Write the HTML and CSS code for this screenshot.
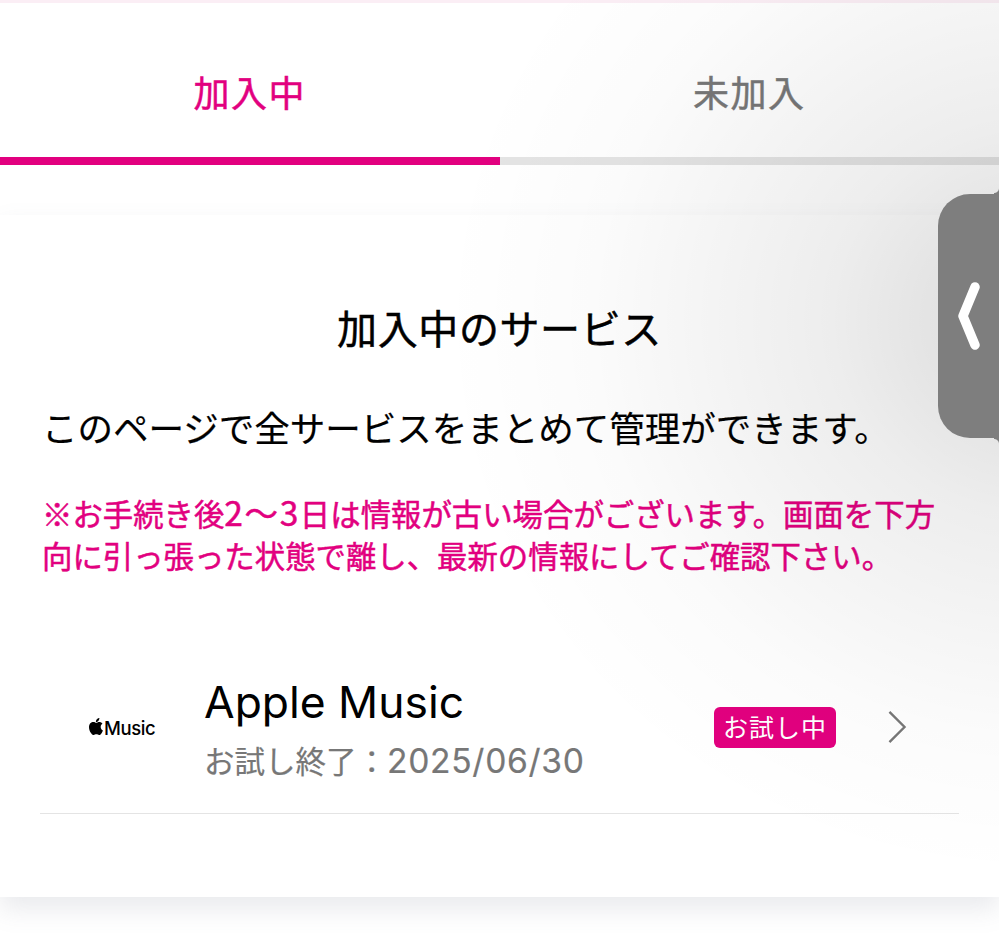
FILE: index.html
```html
<!DOCTYPE html>
<html lang="ja">
<head>
<meta charset="utf-8">
<title>加入中のサービス</title>
<link rel="stylesheet" href="styles.css">
</head>
<body>
<div class="page">
  <div class="top-strip"></div>
  <nav class="tabs">
    <div class="tab tab-active">加入中</div>
    <div class="tab">未加入</div>
  </nav>
  <main class="card">
    <h1 class="title">加入中のサービス</h1>
    <p class="lead">このページで全サービスをまとめて管理ができます。</p>
    <p class="notice">※お手続き後<span class="notice-num">2〜3</span>日は情報が古い場合がございます。画面を下方<br>向に引っ張った状態で離し、最新の情報にしてご確認下さい。</p>
    <div class="service">
      <div class="logo">
        <svg class="apple" viewBox="0 0 814 1000" aria-hidden="true"><path d="M788 341c-6 4-108 62-108 190 0 149 130 201 134 203-1 3-21 72-69 142-43 62-88 123-156 123s-86-39-165-39c-77 0-104 41-167 41s-106-57-156-127C43 792-4 662-4 539c0-198 129-303 256-303 67 0 124 44 166 44 40 0 103-47 180-47 29 0 134 3 190 108zM554 159c32-38 54-90 54-142 0-7-1-15-2-21-52 2-113 34-150 77-29 33-56 85-56 138 0 8 1 16 2 18 3 1 9 2 14 2 46 0 105-31 138-72z"/></svg>
        <span class="logo-text">Music</span>
      </div>
      <div class="service-info">
        <div class="service-name">Apple Music</div>
        <div class="service-sub">お試し終了：<span class="service-date">2025/06/30</span></div>
      </div>
      <span class="badge">お試し中</span>
      <svg class="chev" viewBox="0 0 20 36" aria-hidden="true"><path d="M2 2l16 16L2 34"/></svg>
    </div>
  </main>
  <div class="glow"></div>
  <div class="handle">
    <svg class="handle-icon" viewBox="0 0 24 68" aria-hidden="true"><path d="M18 5L6 34l12 29"/></svg>
  </div>
</div>
</body>
</html>
```
FILE: styles.css
```css
* { box-sizing: border-box; }
html, body { margin: 0; padding: 0; }
body {
  width: 999px;
  height: 941px;
  overflow: hidden;
  background: #fff;
  font-family: "Noto Sans CJK JP", "Noto Sans", sans-serif;
  color: #000;
}
.page {
  position: relative;
  width: 999px;
  height: 941px;
  overflow: hidden;
}
.top-strip {
  height: 3px;
  background: #fbeef5;
}
.tabs {
  display: flex;
  margin-bottom: 50px;
}
.tab {
  width: 50%;
  height: 162px;
  padding-top: 60px;
  border-bottom: 8px solid #e4e4e4;
  text-align: center;
  font-size: 36px;
  line-height: 56px;
  letter-spacing: 1.5px;
  font-weight: 400;
  -webkit-text-stroke: 0.5px currentColor;
  color: #777;
}
.tab-active {
  color: #e2007f;
  border-bottom-color: #e2007f;
}
.card {
  height: 682px;
  padding: 84px 40px 0 42px;
  background: #fff;
  box-shadow: 0 12px 24px rgba(120, 125, 140, 0.16);
}
.title {
  margin: 0;
  text-align: center;
  font-size: 40px;
  line-height: 56px;
  font-weight: 400;
  letter-spacing: 0.6px;
  -webkit-text-stroke: 0.5px currentColor;
  padding-right: 2px;
}
.lead {
  margin: 45px 0 0;
  font-size: 35.5px;
  line-height: 54px;
  white-space: nowrap;
  font-weight: 400;
  -webkit-text-stroke: 0.2px currentColor;
}
.notice {
  margin: 38px 0 0;
  font-size: 30.4px;
  line-height: 42px;
  font-weight: 400;
  -webkit-text-stroke: 0.5px currentColor;
  color: #e2007f;
  white-space: nowrap;
}
.notice-num {
  font-size: 33.5px;
  line-height: 30px;
  letter-spacing: 1.6px;
}
.service {
  display: flex;
  align-items: center;
  margin: 66px 0 0 -2px;
  height: 172px;
  border-bottom: 1px solid #e4e4e4;
}
.logo {
  display: flex;
  align-items: center;
  gap: 1px;
  width: 164px;
  padding-left: 49px;
}
.apple { width: 14px; height: 17px; flex: none; margin-top: -3px; }
.apple path { fill: #000; }
.logo-text {
  font-family: Inter, "Liberation Sans", sans-serif;
  font-size: 18.5px;
  line-height: 24px;
  font-weight: 500;
  letter-spacing: -0.4px;
}
.service-info { flex: 1; padding-top: 3px; }
.service-name {
  font-family: Inter, "Liberation Sans", sans-serif;
  font-size: 44.4px;
  line-height: 54px;
  font-weight: 400;
}
.service-sub {
  margin-top: 8px;
  font-size: 30.5px;
  line-height: 46px;
  color: #777;
  -webkit-text-stroke: 0.2px currentColor;
}
.service-date {
  font-family: Inter, "Liberation Sans", sans-serif;
  font-size: 33.6px;
  letter-spacing: 0.7px;
}
.badge {
  width: 122px;
  height: 41px;
  margin: 0 51px 0 0;
  border-radius: 6px;
  background: #e2007f;
  color: #fff;
  text-align: center;
  font-size: 25px;
  line-height: 38px;
  letter-spacing: 1px;
}
.chev {
  width: 20px;
  height: 34px;
  margin: -2px 52px 0 0;
  flex: none;
}
.chev path { fill: none; stroke: #777; stroke-width: 2.5; }
.glow {
  position: absolute;
  inset: 0;
  pointer-events: none;
  background: radial-gradient(ellipse 600px 560px at 1040px 320px, rgba(0,0,0,0.15) 0%, rgba(0,0,0,0.07) 35%, rgba(0,0,0,0.015) 75%, rgba(0,0,0,0) 100%);
}
.handle {
  position: absolute;
  top: 194px;
  left: 938px;
  width: 61px;
  height: 244px;
  border-radius: 32px 0 0 32px;
  background: #7e7e7e;
}
.handle::before,
.handle::after {
  content: "";
  position: absolute;
  right: 0;
  width: 5px;
  height: 6px;
}
.handle::before {
  top: -6px;
  background: radial-gradient(circle at 0 0, transparent 4.5px, #7e7e7e 5.5px);
}
.handle::after {
  top: 100%;
  background: radial-gradient(circle at 0 100%, transparent 4.5px, #7e7e7e 5.5px);
}
.handle-icon {
  position: absolute;
  left: 19px;
  top: 88px;
  width: 24px;
  height: 68px;
}
.handle-icon path {
  fill: none;
  stroke: #fff;
  stroke-width: 9.5;
  stroke-linecap: round;
  stroke-linejoin: round;
}
```
